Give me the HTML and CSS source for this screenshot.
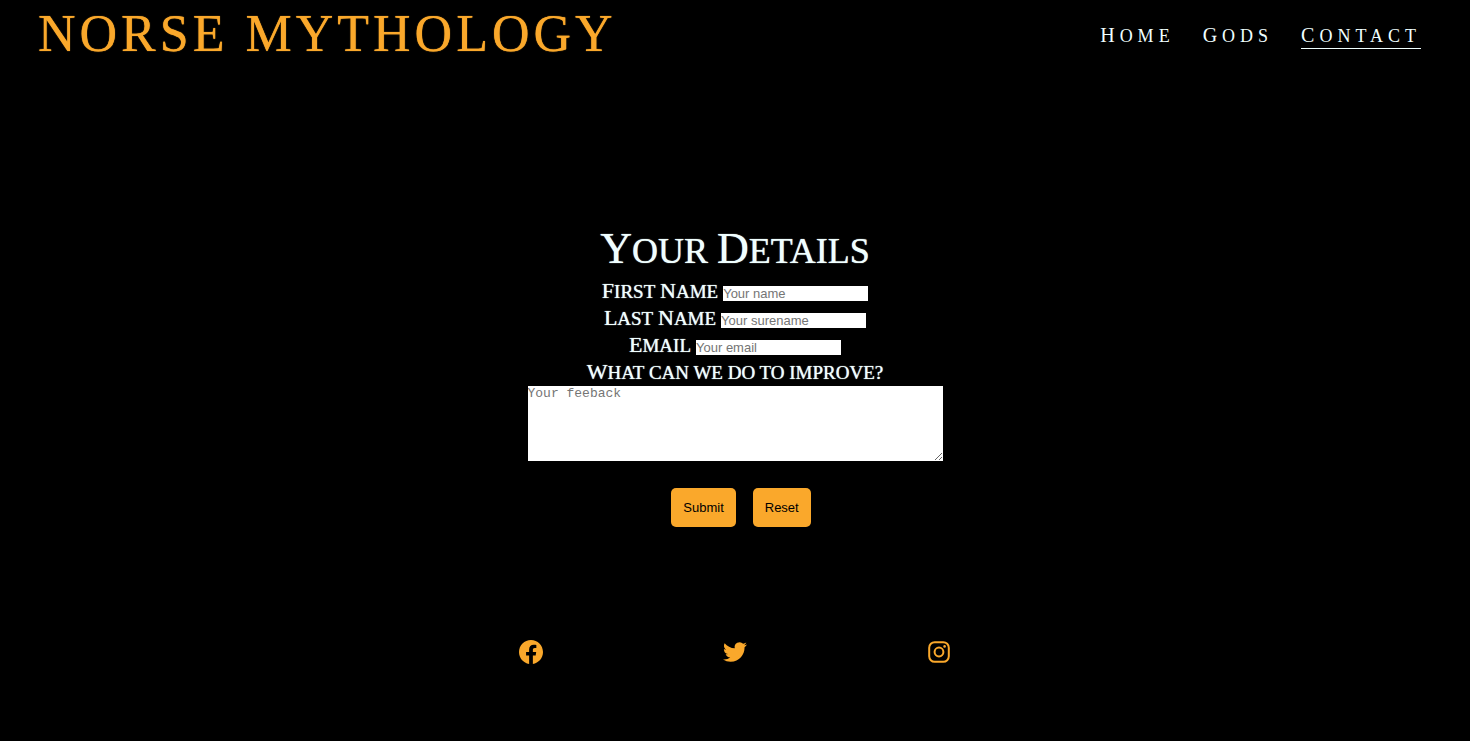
FILE: index.html
```html
<!DOCTYPE html>
<html lang="en">
<head>
<meta charset="utf-8">
<meta name="viewport" content="width=device-width, initial-scale=1">
<title>Norse Mythology - Contact</title>
<link rel="stylesheet" href="styles.css">
</head>
<body>
<header class="header">
  <h1 class="logo">Norse Mythology</h1>
  <nav class="nav">
    <a class="nav-link" href="#home">Home</a>
    <a class="nav-link" href="#gods">Gods</a>
    <a class="nav-link active" href="#contact">Contact</a>
  </nav>
</header>
<main class="main">
  <form class="form">
    <h2 class="title"><span class="word">Your</span> <span class="word">Details</span></h2>
    <div class="row">
      <label class="label" for="fname"><span class="word">First</span> <span class="word">Name</span></label>
      <input class="field" id="fname" type="text" placeholder="Your name">
    </div>
    <div class="row">
      <label class="label" for="lname"><span class="word">Last</span> <span class="word">Name</span></label>
      <input class="field" id="lname" type="text" placeholder="Your surename">
    </div>
    <div class="row">
      <label class="label" for="email"><span class="word">Email</span></label>
      <input class="field" id="email" type="email" placeholder="Your email">
    </div>
    <div class="row">
      <label class="label" for="feedback"><span class="word">What can we do to improve?</span></label>
    </div>
    <textarea class="feedback" id="feedback" rows="5" placeholder="Your feeback"></textarea>
    <div class="actions">
      <button class="button" type="submit">Submit</button>
      <button class="button" type="reset">Reset</button>
    </div>
  </form>
</main>
<footer class="footer">
  <a class="social" href="#facebook" aria-label="Facebook">
    <svg class="icon" viewBox="0 0 24 24"><path fill="currentColor" d="M24 12.07C24 5.41 18.63 0 12 0S0 5.41 0 12.07c0 6.03 4.39 11.02 10.12 11.93v-8.44H7.08v-3.49h3.04V9.41c0-3.02 1.79-4.69 4.53-4.69 1.31 0 2.69.24 2.69.24v2.97h-1.52c-1.49 0-1.95.93-1.95 1.89v2.25h3.32l-.53 3.49h-2.79V24C19.61 23.09 24 18.1 24 12.07z"/></svg>
  </a>
  <a class="social" href="#twitter" aria-label="Twitter">
    <svg class="icon" viewBox="0 0 24 24"><path fill="currentColor" d="M23.95 4.57a10 10 0 0 1-2.82.77 4.96 4.96 0 0 0 2.16-2.72c-.95.55-2 .95-3.13 1.18a4.92 4.92 0 0 0-8.38 4.48C7.69 8.09 4.07 6.13 1.64 3.16a4.82 4.82 0 0 0-.67 2.48c0 1.71.87 3.21 2.19 4.09a4.9 4.9 0 0 1-2.23-.61v.06a4.92 4.92 0 0 0 3.95 4.83 5 5 0 0 1-2.21.08 4.94 4.94 0 0 0 4.6 3.42A9.87 9.87 0 0 1 0 19.54a13.99 13.99 0 0 0 7.55 2.21c9.05 0 14-7.5 14-13.99 0-.21 0-.42-.02-.63a9.94 9.94 0 0 0 2.46-2.55z"/></svg>
  </a>
  <a class="social" href="#instagram" aria-label="Instagram">
    <svg class="icon" viewBox="0 0 24 24" fill="none" stroke="currentColor" stroke-width="2"><rect x="2.2" y="2.2" width="19.6" height="19.6" rx="5.5"/><circle cx="12" cy="12" r="4.4"/><circle cx="17.6" cy="6.4" r="1.3" fill="currentColor" stroke="none"/></svg>
  </a>
</footer>
</body>
</html>
```
FILE: styles.css
```css
* {
  box-sizing: border-box;
  margin: 0;
  padding: 0;
}

body {
  min-height: 100vh;
  display: flex;
  flex-direction: column;
  background: #000;
  color: #f0ffff;
  font-family: "Liberation Serif", serif;
}

.header {
  display: flex;
  justify-content: space-between;
  align-items: center;
  padding: 4px 49px 0 38px;
}

.logo {
  color: #faa82b;
  font-size: 52px;
  line-height: 60px;
  font-weight: 400;
  letter-spacing: 4px;
  text-transform: uppercase;
  text-shadow: 0 0 1px currentColor;
}

.nav {
  display: flex;
  gap: 28px;
  padding-top: 4px;
}

.nav-link {
  display: block;
  height: 26px;
  color: inherit;
  font-size: 18px;
  line-height: 25px;
  letter-spacing: 5px;
  text-decoration: none;
  text-transform: uppercase;
  border-bottom: 1px solid transparent;
}

.nav-link::first-letter {
  font-size: 20px;
}

.nav-link.active {
  border-color: #f0ffff;
}

.main {
  flex: 1;
  display: flex;
  flex-direction: column;
  align-items: center;
  padding-top: 158px;
}

.form {
  display: flex;
  flex-direction: column;
  align-items: center;
}

.word {
  display: inline-block;
  text-transform: uppercase;
  text-shadow: 0 0 1px currentColor;
}

.title {
  font-size: 36px;
  line-height: 54px;
  font-weight: 400;
}

.title .word::first-letter {
  font-size: 44px;
}

.row {
  display: flex;
  align-items: center;
  gap: 5px;
  height: 27px;
}

.label {
  padding-bottom: 2px;
  font-size: 19px;
  line-height: 25px;
}

.label .word::first-letter {
  font-size: 22px;
}

.field {
  width: 145px;
  height: 15px;
  margin-top: 4px;
  border: 0;
  background: #fff;
  font: 13px/15px "Liberation Sans", Arial, sans-serif;
}

.feedback {
  width: 415px;
  height: 75px;
  border: 0;
  background: #fff;
  font: 13px/15px "Liberation Mono", monospace;
}

.field::placeholder,
.feedback::placeholder {
  color: #757575;
}

.actions {
  display: flex;
  gap: 17px;
  margin-top: 27px;
  padding-left: 12px;
}

.button {
  padding: 12px;
  border: 0;
  border-radius: 5px;
  background: #faa82b;
  color: #000;
  font: 13px/15px "Liberation Sans", Arial, sans-serif;
}

.footer {
  display: flex;
  justify-content: space-around;
  width: 100%;
  max-width: 612px;
  margin: 0 auto;
  padding-bottom: 77px;
}

.social {
  color: #faa82b;
}

.icon {
  display: block;
  width: 24px;
  height: 24px;
}
```
